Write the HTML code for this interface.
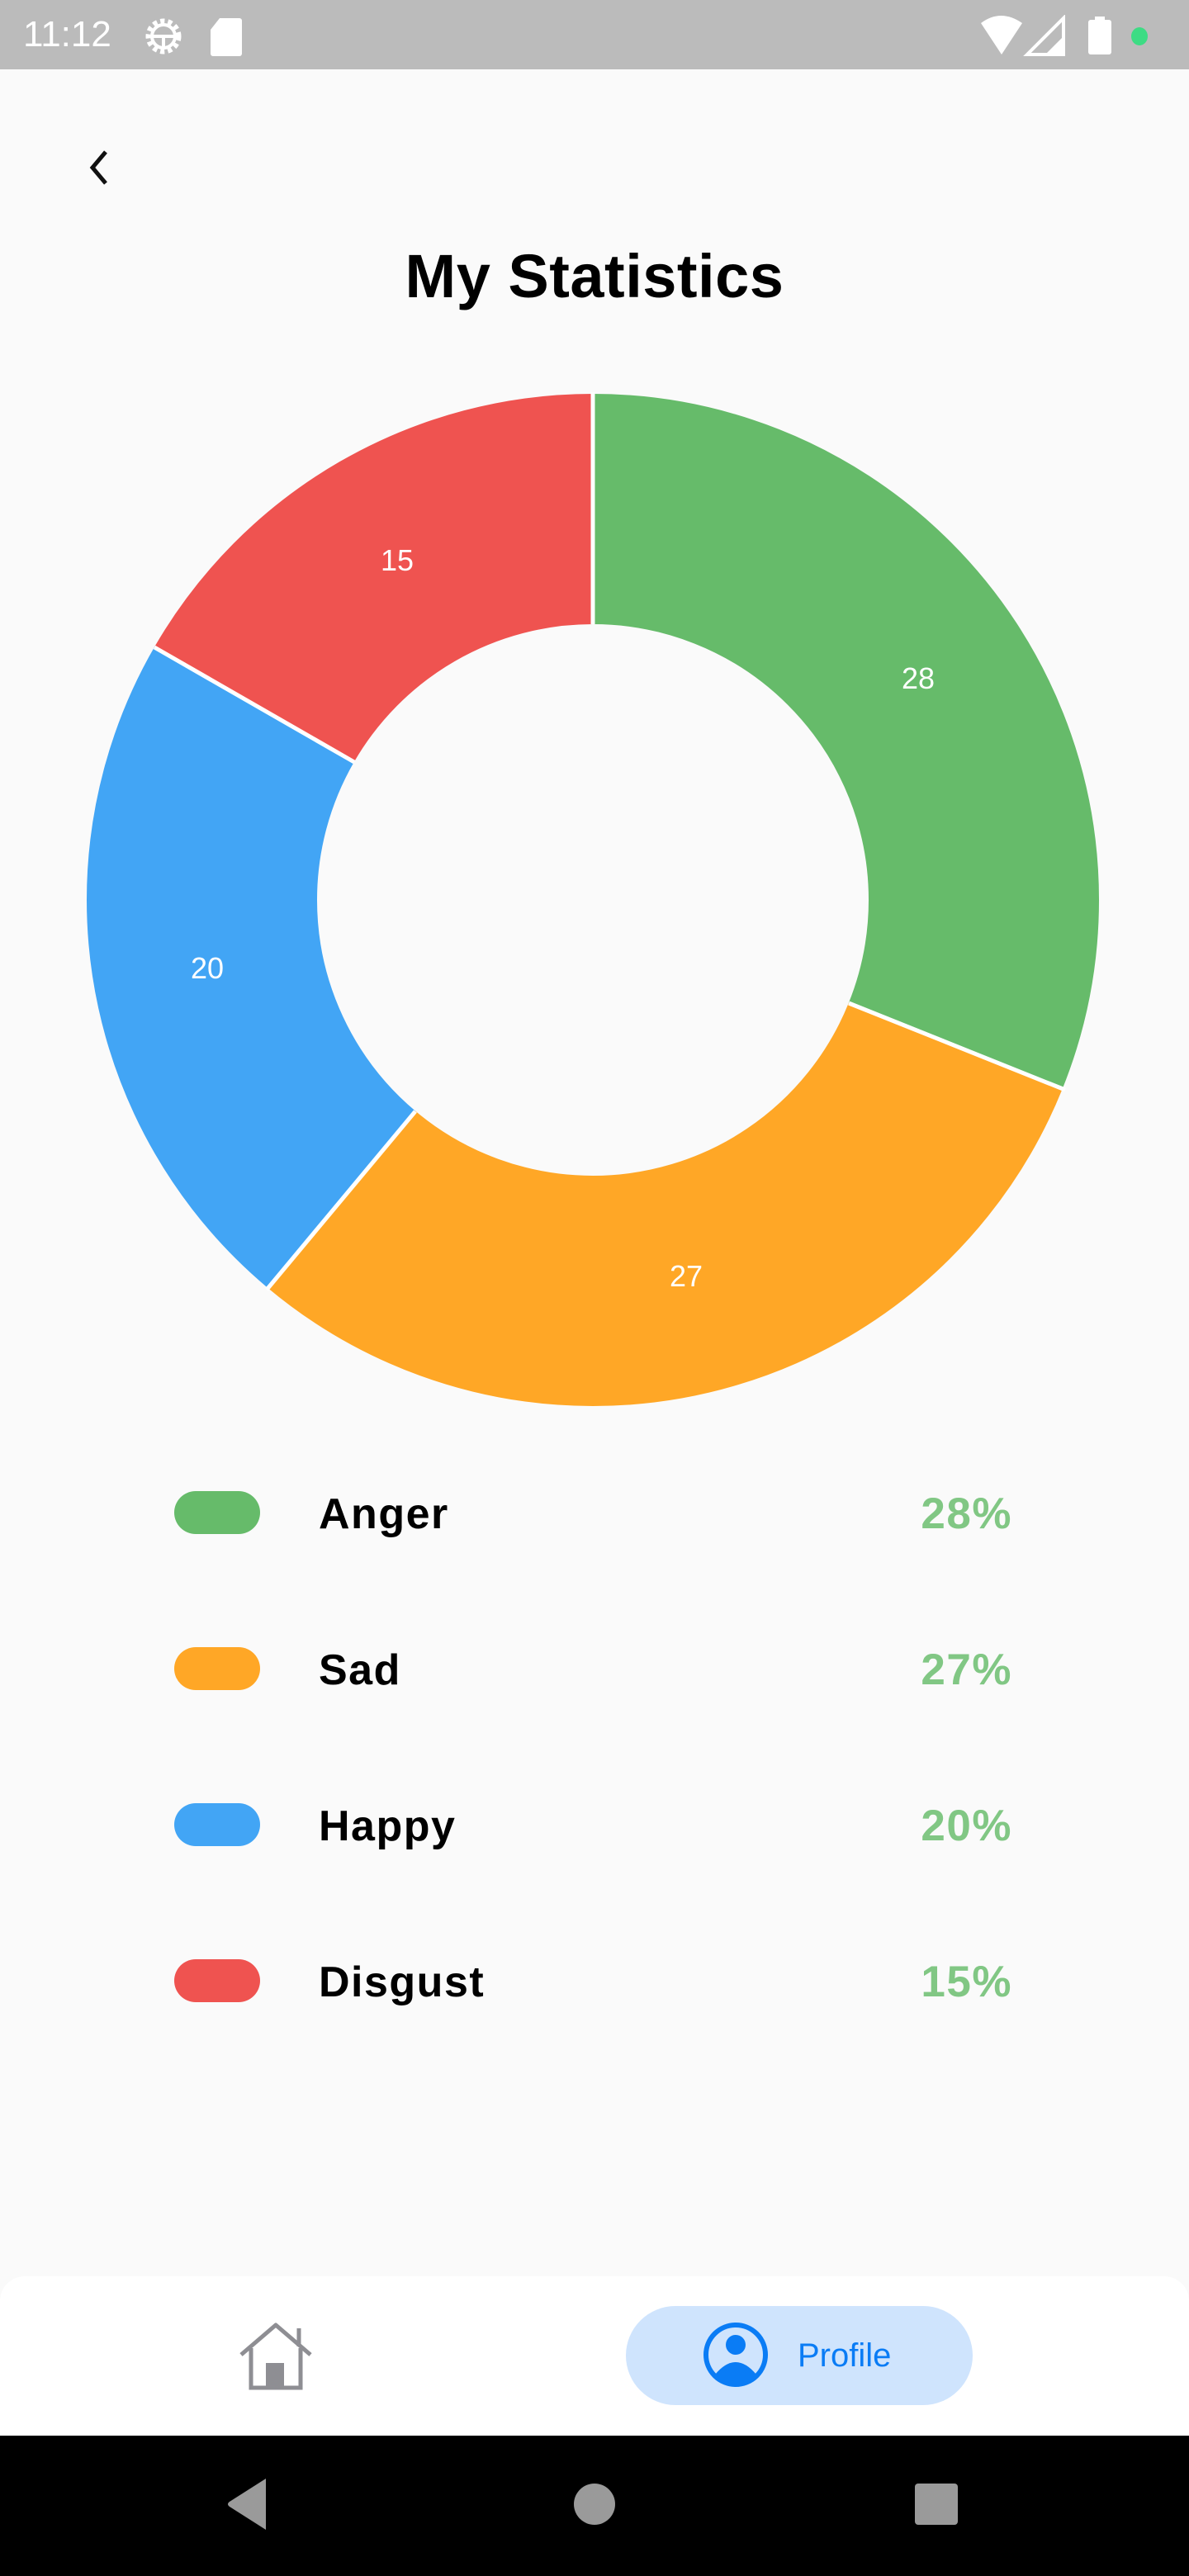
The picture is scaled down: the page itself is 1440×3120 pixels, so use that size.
<!DOCTYPE html>
<html><head><meta charset="utf-8"><style>
*{margin:0;padding:0;box-sizing:border-box}
body{width:1440px;height:3120px;background:#fafafa;font-family:"Liberation Sans",sans-serif;position:relative;overflow:hidden}
.abs{position:absolute}
.status{left:0;top:0;width:1440px;height:84px;background:#bbbbbb}
.title{left:0;width:1440px;top:292px;text-align:center;font-weight:bold;font-size:74px;color:#000;letter-spacing:0.5px}
.pill{left:211px;width:104px;height:52px;border-radius:26px}
.lab{left:386px;font-weight:bold;font-size:52px;color:#000;line-height:60px;letter-spacing:1.5px}
.pct{right:214px;font-weight:bold;font-size:53px;color:#81c784;line-height:60px;text-align:right;letter-spacing:1.5px}
.nav{left:0;top:2757px;width:1440px;height:200px;background:#fff;border-radius:30px 30px 0 0}
.sys{left:0;top:2950px;width:1440px;height:170px;background:#000}
</style></head><body>
<div class="abs status"></div>
<div class="abs" style="left:28px;top:14px;font-size:44px;color:#fff;line-height:56px">11:12</div>
<svg class="abs" style="left:170px;top:16px" width="56" height="56" viewBox="0 0 56 56"><circle cx="28" cy="28" r="18" fill="none" stroke="#fff" stroke-width="7" stroke-dasharray="5 4"/><circle cx="28" cy="28" r="14" fill="none" stroke="#fff" stroke-width="4"/><path d="M14 28h28M28 28v14" stroke="#fff" stroke-width="4"/></svg>
<svg class="abs" style="left:254px;top:20px" width="40" height="50" viewBox="0 0 40 50"><path d="M12 2h24a3 3 0 0 1 3 3v40a3 3 0 0 1-3 3H4a3 3 0 0 1-3-3V16z" fill="#fff"/></svg>
<svg class="abs" style="left:1186px;top:18px" width="220" height="50" viewBox="0 0 220 50"><path d="M2 10 Q26 -8 52 10 L27 48z" fill="#fff"/><path d="M58 48 L102 4 V48z" fill="none" stroke="#fff" stroke-width="4"/><path d="M80 48 L102 26 V48z" fill="#fff"/><rect x="132" y="6" width="28" height="42" rx="3" fill="#fff"/><rect x="140" y="2" width="12" height="6" fill="#fff"/><ellipse cx="194" cy="26" rx="10" ry="11" fill="#3ddc84"/></svg>
<svg class="abs" style="left:100px;top:180px" width="40" height="46" viewBox="0 0 40 46"><path d="M28 4 L12 23 L28 42" fill="none" stroke="#111" stroke-width="5"/></svg>
<div class="abs title">My Statistics</div>
<svg class="abs" style="left:0;top:0" width="1440" height="1750" viewBox="0 0 1440 1750">
<g transform="rotate(-90 718 1090)" fill="none" stroke-width="279">
<circle cx="718" cy="1090" r="473.5" stroke="#66bb6a" stroke-dasharray="925.6 3000"/>
<circle cx="718" cy="1090" r="473.5" stroke="#ffa726" stroke-dasharray="0 925.6 892.5 3000"/>
<circle cx="718" cy="1090" r="473.5" stroke="#42a5f5" stroke-dasharray="0 1818.1 661.1 3000"/>
<circle cx="718" cy="1090" r="473.5" stroke="#ef5350" stroke-dasharray="0 2479.2 496 3000"/>
</g>
<g stroke="#fff" stroke-width="5">
<line x1="718" y1="756" x2="718" y2="475"/>
<line x1="1028" y1="1215" x2="1290" y2="1320"/>
<line x1="503" y1="1346" x2="323" y2="1562"/>
<line x1="429" y1="923" x2="187" y2="784"/>
</g>
<g fill="#fff" font-size="36" text-anchor="middle" font-family="Liberation Sans,sans-serif">
<text x="1112" y="834">28</text><text x="831" y="1558">27</text><text x="251" y="1185">20</text><text x="481" y="691">15</text>
</g>
</svg>
<div class="abs pill" style="top:1806px;background:#66bb6a"></div>
<div class="abs lab" style="top:1804px">Anger</div>
<div class="abs pct" style="top:1804px">28%</div>
<div class="abs pill" style="top:1995px;background:#ffa726"></div>
<div class="abs lab" style="top:1993px">Sad</div>
<div class="abs pct" style="top:1993px">27%</div>
<div class="abs pill" style="top:2184px;background:#42a5f5"></div>
<div class="abs lab" style="top:2182px">Happy</div>
<div class="abs pct" style="top:2182px">20%</div>
<div class="abs pill" style="top:2373px;background:#ef5350"></div>
<div class="abs lab" style="top:2371px">Disgust</div>
<div class="abs pct" style="top:2371px">15%</div>
<div class="abs nav"></div>
<svg class="abs" style="left:288px;top:2812px" width="92" height="84" viewBox="0 0 92 84"><path d="M4 40 L46 4 L88 40" fill="none" stroke="#8e8e93" stroke-width="5" stroke-linejoin="round"/><path d="M74 8 V30" stroke="#8e8e93" stroke-width="5"/><path d="M16 32 V80 H76 V32" fill="none" stroke="#8e8e93" stroke-width="5"/><rect x="34" y="50" width="22" height="30" fill="#8e8e93"/></svg>
<div class="abs" style="left:758px;top:2793px;width:420px;height:120px;border-radius:60px;background:#cfe4fd"></div>
<svg class="abs" style="left:851px;top:2812px" width="80" height="80" viewBox="0 0 80 80"><circle cx="40" cy="40" r="36" fill="none" stroke="#0a7cf5" stroke-width="6"/><circle cx="40" cy="28" r="12" fill="#0a7cf5"/><path d="M15 64 Q40 34 65 64 Q40 84 15 64z" fill="#0a7cf5"/></svg>
<div class="abs" style="left:966px;top:2830px;font-size:40px;color:#0a7cf5;line-height:46px">Profile</div>
<div class="abs sys"></div>
<svg class="abs" style="left:270px;top:2998px" width="60" height="70" viewBox="0 0 60 70"><path d="M52 4 V66 L8 38 Q4 35 8 32z" fill="#9a9a9a"/></svg>
<div class="abs" style="left:695px;top:3008px;width:50px;height:50px;border-radius:50%;background:#9a9a9a"></div>
<div class="abs" style="left:1108px;top:3008px;width:52px;height:50px;border-radius:4px;background:#9a9a9a"></div>
</body></html>
